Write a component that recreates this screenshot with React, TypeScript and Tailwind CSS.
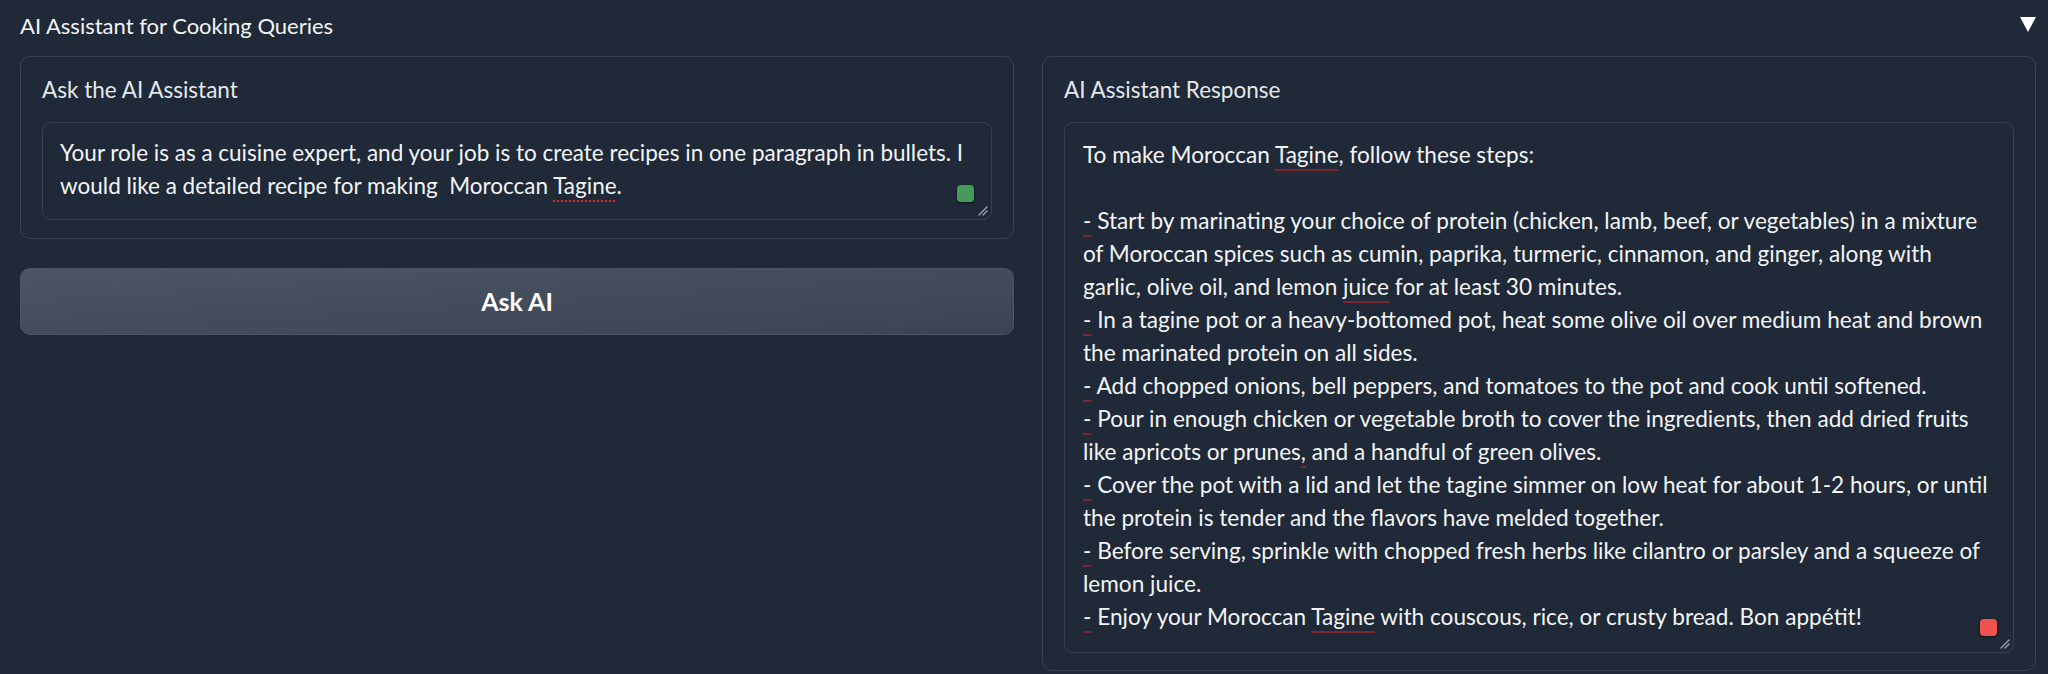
const red = "underline decoration-[#7b2630] decoration-2 underline-offset-[6px]";

function Dash() {
  return <span className={red}>-</span>;
}

function Grip() {
  return (
    <svg className="absolute right-[3px] bottom-[3px]" width="11" height="11" viewBox="0 0 11 11">
      <path d="M10 2 L2 10 M10 6 L6 10" stroke="#9ca3af" strokeWidth="1.4" strokeLinecap="round" />
    </svg>
  );
}

export default function App() {
  return (
    <div
      className="w-screen h-screen overflow-hidden bg-[#1f2937] text-[#e5e7eb] pl-[20px] pr-[12px]"
      style={{ fontFamily: "Lato, 'Liberation Sans', sans-serif" }}
    >
      <div className="h-[50px] flex items-center justify-between">
        <span className="text-[22px] text-[#f3f4f6]">AI Assistant for Cooking Queries</span>
        <svg width="16" height="15" viewBox="0 0 16 15" className="-mt-[1px]">
          <polygon points="0,0 16,0 8,15" fill="#ffffff" />
        </svg>
      </div>

      <div className="mt-[6px] grid grid-cols-2 gap-[28px] items-start">
        <div className="flex flex-col gap-[29px]">
          <div className="border border-[#374151] rounded-[10px] px-[21px] pt-[20px] pb-[18px]">
            <div className="text-[22.5px] leading-[26px] text-[#e5e7eb] mb-[19px]">Ask the AI Assistant</div>
            <div className="relative border border-[#374151] rounded-[9px] h-[98px] pl-[17px] pr-[20px] pt-[13px] text-[22.5px] leading-[33px] text-[#f3f4f6]">
              Your role is as a cuisine expert, and your job is to create recipes in one paragraph in bullets. I would like a detailed recipe for making &nbsp;Moroccan{" "}
              <span className="underline decoration-dotted decoration-[#dc2626] decoration-2 underline-offset-[6px]">Tagine</span>.
              <span className="absolute right-[17px] bottom-[17px] w-[17px] h-[17px] rounded-[4px] bg-[#479a58] shadow-[0_1px_3px_rgba(0,0,0,0.5)]" />
              <Grip />
            </div>
          </div>

          <button className="h-[67px] rounded-[10px] border border-[#4b5563] bg-gradient-to-br from-[#4b5563] to-[#3b4453] text-white text-[25px] font-bold">
            Ask AI
          </button>
        </div>

        <div className="border border-[#374151] rounded-[10px] px-[21px] pt-[20px] pb-[17px]">
          <div className="text-[22.5px] leading-[26px] text-[#e5e7eb] mb-[19px]">AI Assistant Response</div>
          <div className="relative border border-[#374151] rounded-[9px] h-[531px] pl-[18px] pr-[25px] pt-[15px] text-[22.6px] leading-[33px] text-[#f3f4f6] whitespace-pre-wrap">
            To make Moroccan <span className={red}>Tagine</span>, follow these steps:{"\n\n"}
            <Dash /> Start by marinating your choice of protein (chicken, lamb, beef, or vegetables) in a mixture of Moroccan spices such as cumin, paprika, turmeric, cinnamon, and ginger, along with garlic, olive oil, and lemon <span className={red}>juice</span> for at least 30 minutes.{"\n"}
            <Dash /> In a tagine pot or a heavy-bottomed pot, heat some olive oil over medium heat and brown the marinated protein on all sides.{"\n"}
            <Dash /> Add chopped onions, bell peppers, and tomatoes to the pot and cook until softened.{"\n"}
            <Dash /> Pour in enough chicken or vegetable broth to cover the ingredients, then add dried fruits like apricots or prunes<span className={red}>,</span> and a handful of green olives.{"\n"}
            <Dash /> Cover the pot with a lid and let the tagine simmer on low heat for about 1-2 hours, or until the protein is tender and the flavors have melded together.{"\n"}
            <Dash /> Before serving, sprinkle with chopped fresh herbs like cilantro or parsley and a squeeze of lemon juice.{"\n"}
            <Dash /> Enjoy your Moroccan <span className={red}>Tagine</span> with couscous, rice, or crusty bread. Bon appétit!
            <span className="absolute right-[16px] bottom-[16px] w-[17px] h-[17px] rounded-[4px] bg-[#f05252] shadow-[0_1px_3px_rgba(0,0,0,0.5)]" />
            <Grip />
          </div>
        </div>
      </div>
    </div>
  );
}
